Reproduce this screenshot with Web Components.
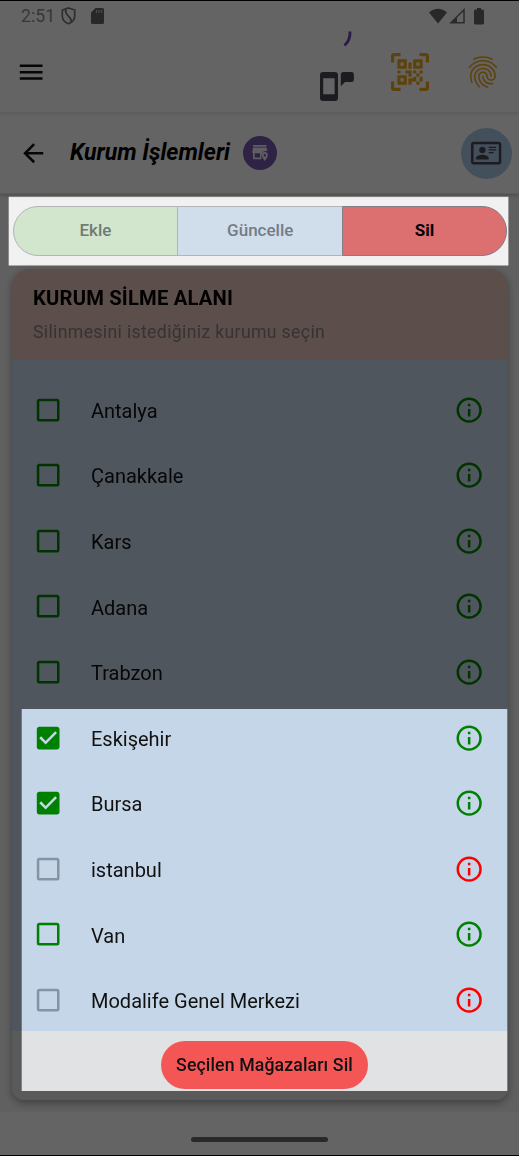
<!DOCTYPE html>
<html lang="tr">
<head>
<meta charset="utf-8">
<title>Kurum İşlemleri</title>
<style>
html,body{margin:0;padding:0;background:#f1f1f1}
body{font-family:Roboto,"Noto Sans",sans-serif;color:#111;width:519px;height:1156px;overflow:hidden}
</style>
</head>
<body>
<kurum-app></kurum-app>
<script>
const ICONS={
menu:'M3,6H21V8H3V6M3,11H21V13H3V11M3,16H21V18H3V16Z',
back:'M20,11V13H8L13.5,18.5L12.08,19.92L4.16,12L12.08,4.08L13.5,5.5L8,11H20Z',
qr:'M4,4H10V10H4V4M20,4V10H14V4H20M14,15H16V13H14V11H16V13H18V11H20V13H18V15H20V18H18V20H16V18H13V20H11V16H14V15M16,15V18H18V15H16M4,20V14H10V20H4M6,6V8H8V6H6M16,6V8H18V6H16M6,16V18H8V16H6M4,11H6V13H4V11M9,11H13V15H11V13H9V11M11,6H13V10H11V6M2,2V6H0V2A2,2 0 0,1 2,0H6V2H2M22,0A2,2 0 0,1 24,2V6H22V2H18V0H22M2,18V22H6V24H2A2,2 0 0,1 0,22V18H2M22,22V18H24V22A2,2 0 0,1 22,24H18V22H22Z',
finger:'M17.81,4.47C17.73,4.47 17.65,4.45 17.58,4.41C15.66,3.42 14,3 12,3C10.03,3 8.15,3.47 6.44,4.41C6.2,4.54 5.9,4.45 5.76,4.21C5.63,3.97 5.72,3.66 5.96,3.53C7.82,2.5 9.86,2 12,2C14.14,2 16,2.47 18.04,3.5C18.29,3.65 18.38,3.95 18.25,4.19C18.16,4.37 18,4.47 17.81,4.47M3.5,9.72C3.4,9.72 3.3,9.69 3.21,9.63C3,9.47 2.93,9.16 3.09,8.93C4.08,7.53 5.34,6.43 6.84,5.66C10,4.04 14,4.03 17.15,5.65C18.65,6.42 19.91,7.5 20.9,8.9C21.06,9.12 21,9.44 20.78,9.6C20.55,9.76 20.24,9.71 20.08,9.5C19.18,8.22 18.04,7.23 16.69,6.54C13.82,5.07 10.15,5.07 7.29,6.55C5.93,7.25 4.79,8.25 3.89,9.5C3.81,9.65 3.66,9.72 3.5,9.72M9.75,21.79C9.62,21.79 9.5,21.74 9.4,21.64C8.53,20.77 8.06,20.21 7.39,19C6.7,17.77 6.34,16.27 6.34,14.66C6.34,11.69 8.88,9.27 12,9.27C15.12,9.27 17.66,11.69 17.66,14.66A0.5,0.5 0 0,1 17.16,15.16A0.5,0.5 0 0,1 16.66,14.66C16.66,12.24 14.57,10.27 12,10.27C9.43,10.27 7.34,12.24 7.34,14.66C7.34,16.1 7.66,17.43 8.27,18.5C8.91,19.66 9.35,20.15 10.12,20.93C10.31,21.13 10.31,21.44 10.12,21.64C10,21.74 9.88,21.79 9.75,21.79M16.92,19.94C15.73,19.94 14.68,19.64 13.82,19.05C12.33,18.04 11.44,16.4 11.44,14.66A0.5,0.5 0 0,1 11.94,14.16A0.5,0.5 0 0,1 12.44,14.66C12.44,16.07 13.16,17.4 14.38,18.22C15.09,18.7 15.92,18.93 16.92,18.93C17.16,18.93 17.56,18.9 17.96,18.83C18.23,18.78 18.5,18.96 18.54,19.24C18.59,19.5 18.41,19.77 18.13,19.82C17.56,19.93 17.06,19.94 16.92,19.94M14.91,22C14.87,22 14.82,22 14.78,22C13.19,21.54 12.15,20.95 11.06,19.88C9.66,18.5 8.89,16.64 8.89,14.66C8.89,13.04 10.27,11.72 11.97,11.72C13.67,11.72 15.05,13.04 15.05,14.66C15.05,15.73 16,16.6 17.13,16.6C18.28,16.6 19.21,15.73 19.21,14.66C19.21,10.89 15.96,7.83 11.96,7.83C9.12,7.83 6.5,9.41 5.35,11.86C4.96,12.67 4.76,13.62 4.76,14.66C4.76,15.44 4.83,16.67 5.43,18.27C5.53,18.53 5.4,18.82 5.14,18.91C4.88,19 4.59,18.87 4.5,18.62C4,17.31 3.77,16 3.77,14.66C3.77,13.46 4,12.37 4.45,11.42C5.78,8.63 8.73,6.82 11.96,6.82C16.5,6.82 20.21,10.33 20.21,14.65C20.21,16.27 18.83,17.59 17.13,17.59C15.43,17.59 14.05,16.27 14.05,14.65C14.05,13.58 13.12,12.71 11.97,12.71C10.82,12.71 9.89,13.58 9.89,14.65C9.89,16.36 10.55,17.96 11.76,19.16C12.71,20.1 13.62,20.62 15.03,21C15.3,21.08 15.45,21.36 15.38,21.62C15.33,21.85 15.12,22 14.91,22Z',
card:'M22,3H2C0.91,3.04 0.04,3.91 0,5V19C0.04,20.09 0.91,20.96 2,21H22C23.09,20.96 23.96,20.09 24,19V5C23.96,3.91 23.09,3.04 22,3M22,19H2V5H22V19M14,17V15.75C14,14.09 10.66,13.25 9,13.25C7.34,13.25 4,14.09 4,15.75V17H14M9,7A2.5,2.5 0 0,0 6.5,9.5A2.5,2.5 0 0,0 9,12A2.5,2.5 0 0,0 11.5,9.5A2.5,2.5 0 0,0 9,7M14,7V8H20V7H14M14,9V10H20V9H14M14,11V12H18V11H14',
info:'M11,9H13V7H11M12,20C7.59,20 4,16.41 4,12C4,7.59 7.59,4 12,4C16.41,4 20,7.59 20,12C20,16.41 16.41,20 12,20M12,2A10,10 0 0,0 2,12A10,10 0 0,0 12,22A10,10 0 0,0 22,12A10,10 0 0,0 12,2M11,17H13V11H11V17Z',
box:'M19,3H5C3.89,3 3,3.89 3,5V19A2,2 0 0,0 5,21H19A2,2 0 0,0 21,19V5C21,3.89 20.1,3 19,3M19,5V19H5V5H19Z',
checked:'M10,17L5,12L6.41,10.58L10,14.17L17.59,6.58L19,8M19,3H5C3.89,3 3,3.89 3,5V19C3,20.1 3.9,21 5,21H19C20.1,21 21,20.1 21,19V5C21,3.89 20.1,3 19,3Z',
phone:'M3,0H15A3,3 0 0,1 18,3V26A3,3 0 0,1 15,29H3A3,3 0 0,1 0,26V3A3,3 0 0,1 3,0M3.2,6.3V22.3H14.600V6.300ZM23,0H31.500A2.400,2.400 0 0,1 33.900,2.400V7.700A2.400,2.400 0 0,1 31.500,10.100H25L20.800,14.300V2.400A2.400,2.400 0 0,1 23,0Z',
store:'M1,0H14.500V1.700H1ZM1,2.500H14.500L15.300,6.300A5,5 0 0,0 9.500,9.500V14.300H1V8H0.300V6.300ZM2.700,8.200V12.500H8V8.200ZM12.700,7A3.100,3.100 0 0,1 15.800,10.100C15.800,12.500 12.700,16 12.700,16S9.900,12.500 9.900,10.100A3,3 0 0,1 12.700,7M12.800,9A1.200,1.200 0 1,0 12.800,11.400A1.200,1.200 0 1,0 12.800,9Z'
};
const define=(n,html)=>customElements.define(n,class extends HTMLElement{
 connectedCallback(){if(this.shadowRoot)return;this.attachShadow({mode:'open'}).innerHTML=typeof html==='function'?html(this):html;}
});
define('app-icon',e=>{const s=+(e.getAttribute('size')||30.3);const vb=e.getAttribute('box')||'0 0 24 24';
return `<style>:host{display:block;width:${s}px;flex:none}svg{display:block;width:100%;height:auto;overflow:visible}</style><svg viewBox="${vb}" fill="currentColor" fill-rule="evenodd"><path d="${ICONS[e.getAttribute('name')]}"/></svg>`});

define('status-bar',`<style>:host{display:flex;align-items:center;height:32px;padding:0 35px 1px 21px;box-sizing:border-box;border-top:1px solid #000;color:#8a8a8a;font-size:17.6px;letter-spacing:.1px}
svg{display:block;flex:none}.shield{margin-left:6px}.sd{margin-left:15px}.right{margin-left:auto;display:flex;align-items:center}.bat{margin-left:8px}</style>
<span>2:51</span>
<svg class="shield" width="15" height="18" viewBox="0 0 15 18" fill="none" stroke="#747474" stroke-width="1.700"><path d="M7.500 1L13.700 3V9C13.700 13 11.500 15.300 7.500 16.800C3.500 15.300 1.300 13 1.300 9V3ZM4.600 2.500C3.800 9.500 10.800 8.500 10.300 15"/></svg>
<svg class="sd" width="13" height="16" viewBox="0 0 13 16"><path fill="#656565" d="M4.500 0H11.500Q13 0 13 1.500V14.500Q13 16 11.500 16H1.500Q0 16 0 14.500V4.500Z"/><path stroke="#bdbdbd" stroke-width="1.200" d="M5.500 2V5M8 2V5M10.500 2V5"/></svg>
<div class="right"><svg width="37" height="17" viewBox="0 0 37 17"><path fill="#656565" d="M0 4.500Q9-3 18 4.500L9 15.500Z"/><path fill="none" stroke="#6c6c6c" stroke-width="1.500" d="M22 14.800H35V1.800Z"/><path fill="#6c6c6c" d="M28 8.500V15H21.500Z"/></svg><svg class="bat" width="10" height="17" viewBox="0 0 10 17"><path fill="#656565" d="M3 0H7V1.500H8.500Q10 1.500 10 3V15Q10 16.500 8.500 16.500H1.500Q0 16.500 0 15V3Q0 1.500 1.500 1.500H3Z"/></svg></div>`);

define('top-bar',`<style>:host{display:flex;align-items:center;height:81px;box-sizing:border-box;padding:0 17.500px 0 16px;border-bottom:1px solid #ebebeb;box-shadow:0 1px 3px rgba(0,0,0,.12)}
.r{margin-left:auto;display:flex;align-items:center;position:relative;color:#e8a71c}.p{color:#49454f;margin:29px 36.500px 0 0}.f{margin-left:35px}
.spin{position:absolute;left:22px;top:-13px}</style>
<app-icon name="menu"></app-icon><div class="r"><svg class="spin" width="10" height="18" viewBox="0 0 10 18"><path d="M8 1.500Q8.500 10 2.500 15.500" fill="none" stroke="#6547b0" stroke-width="2.800"/></svg><app-icon class="p" name="phone" size="34" box="0 0 34 29"></app-icon><app-icon name="qr" size="38"></app-icon><app-icon class="f" name="finger" size="38"></app-icon></div>`);

define('page-title',`<style>:host{display:flex;align-items:center;height:81px;box-sizing:border-box;padding:0 7.500px 0 17.700px;border-bottom:1px solid #e4e4e4}
h1{font-size:23.1px;font-weight:700;font-style:italic;margin:0 0 0 22px;color:#000;white-space:nowrap;line-height:30px}
i{display:flex;align-items:center;justify-content:center;border-radius:50%}.s{width:34px;height:34px;background:#7355ad;color:#eeeaf4;margin-left:12.500px}.c{width:51px;height:51px;background:#aac5e6;color:#49454f;margin-left:auto}</style>
<app-icon name="back"></app-icon><h1>Kurum İşlemleri</h1><i class="s"><app-icon name="store" size="16" box="0 0 16 16"></app-icon></i><i class="c"><app-icon name="card"></app-icon></i>`);

define('seg-tabs',`<style>:host{display:flex;margin:11.500px 12px 0 12.500px;height:50.500px;font-size:17px;font-weight:500}
div{box-sizing:border-box;display:flex;align-items:center;justify-content:center;border:1.300px solid #b2b4b9;color:#6f7b74;padding-bottom:1px}
.a{width:166px;background:#d1e6cd;border-radius:25.500px 0 0 25.500px}.b{width:165px;margin-left:-1px;border-right:0;background:#d0deeb;color:#747c85}.c{width:165px;background:#dc7070;border-color:#857c87;color:#000;border-radius:0 25.500px 25.500px 0;font-weight:700}</style><div class="a">Ekle</div><div class="b">Güncelle</div><div class="c">Sil</div>`);

define('kurum-row',e=>{const st=e.getAttribute('state');const off=st==='off';
return `<style>:host{display:flex;align-items:center;height:65.600px;padding:0 24.200px 0 20.700px;box-sizing:border-box;color:#111;font-size:20px}
.k{color:${off?'#8793a0':'#008000'}}.i{margin-left:auto;color:${off?'#f00':'#008000'}}span{margin-left:28px;position:relative;top:1px}</style>
<app-icon class="k" name="${st==='on'?'checked':'box'}"></app-icon><span><slot></slot></span><app-icon class="i" name="info"></app-icon>`});

define('delete-card',`<style>:host{display:block;margin:12.500px 11px 0 12px;height:831px;border-radius:18px 18px 12px 12px;background:#e1e2e3;overflow:hidden}
header{height:91px;box-sizing:border-box;background:#e6c3b9;padding:15px 21px}
h2{margin:0;font-size:20.2px;line-height:28px;font-weight:700;color:#000;letter-spacing:.19px}p{margin:8px 0 0;font-size:17.7px;line-height:25px;letter-spacing:.33px;color:#858080}
main{height:671px;box-sizing:border-box;padding-top:17.500px;background:#c5d6e8}
footer{display:flex;justify-content:center;padding:10px 0 0 9px}button{font:500 17.7px Roboto,sans-serif;letter-spacing:.12px;color:#111;width:207px;height:48px;border:0;border-radius:24px;background:#f45656;padding:0;white-space:nowrap}</style>
<header><h2>KURUM SİLME ALANI</h2><p>Silinmesini istediğiniz kurumu seçin</p></header>
<main><kurum-row>Antalya</kurum-row><kurum-row>Çanakkale</kurum-row><kurum-row>Kars</kurum-row><kurum-row>Adana</kurum-row><kurum-row>Trabzon</kurum-row><kurum-row state="on">Eskişehir</kurum-row><kurum-row state="on">Bursa</kurum-row><kurum-row state="off">istanbul</kurum-row><kurum-row>Van</kurum-row><kurum-row state="off">Modalife Genel Merkezi</kurum-row></main>
<footer><button>Seçilen Mağazaları Sil</button></footer>`);

define('nav-bar',`<style>:host{display:flex;justify-content:center;align-items:center;height:44px;box-sizing:border-box;background:#fbfbfb;padding-top:12px;border-bottom:1px solid #000}b{width:137px;height:5px;border-radius:3px;background:#686868}</style><b></b>`);

/* Dimming layer with two lit windows */
define('spot-light',`<style>:host{position:absolute;inset:0;background:rgba(0,0,0,.6);pointer-events:none;clip-path:path(evenodd,"M0 0H519V1156H0ZM8.700 196.700H508.400V265.500H8.700ZM21.700 709H507.300V1091H21.700Z")}</style>`);

define('kurum-app',`<style>:host{display:flex;flex-direction:column;position:relative;width:519px;height:1156px;background:#f1f1f1;overflow:hidden}.top{background:#fbfbfb;box-shadow:0 1px 4px rgba(0,0,0,.25)}.bot{margin-top:auto}
delete-card{flex:none}.shadow{filter:drop-shadow(0 3px 4px rgba(0,0,0,.35))}</style>
<div class="top"><status-bar></status-bar><top-bar></top-bar><page-title></page-title></div>
<seg-tabs></seg-tabs><div class="shadow"><delete-card></delete-card></div><nav-bar class="bot"></nav-bar><spot-light></spot-light>`);
</script>
</body>
</html>
